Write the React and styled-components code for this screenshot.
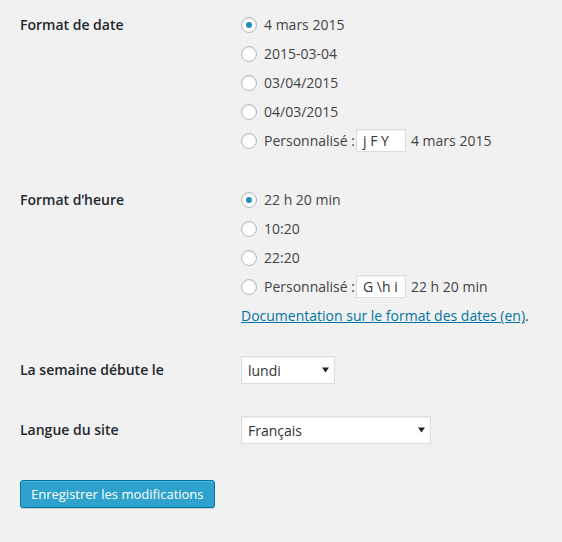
import React from "react";
import styled, { createGlobalStyle } from "styled-components";

const Global = createGlobalStyle`
  html, body { margin: 0; padding: 0; background: #f1f1f1; }
  body { font-family: "Open Sans", "Liberation Sans", sans-serif; font-size: 14px; color: #444; }
  * { box-sizing: border-box; }
`;

const Page = styled.div`
  padding: 10px 20px 20px 20px;
  min-height: 542px;
`;

const Row = styled.div`
  display: grid;
  grid-template-columns: 221px 1fr;
  padding-top: ${(p) => p.$top || 0}px;
`;

const Label = styled.div`
  font-weight: 600;
  color: #23282d;
  font-size: 14px;
  line-height: ${(p) => p.$lh || 29}px;
`;

const Field = styled.div`
  display: flex;
  flex-direction: column;
`;

const Line = styled.div`
  display: flex;
  align-items: center;
  height: 29px;
  white-space: nowrap;
`;

const Radio = styled.span`
  width: 16px;
  height: 16px;
  border-radius: 50%;
  border: 1px solid #b4b9be;
  background: #fff;
  box-shadow: inset 0 1px 2px rgba(0, 0, 0, 0.1);
  margin-right: 7px;
  display: inline-flex;
  align-items: center;
  justify-content: center;
  flex: none;
  &::after {
    content: "";
    width: 6px;
    height: 6px;
    border-radius: 50%;
    background: ${(p) => (p.$checked ? "#1e8cbe" : "transparent")};
  }
`;

const Custom = styled.span`
  display: inline-flex;
  align-items: center;
  width: 50px;
  height: 23px;
  margin: 0 5px 0 1px;
  padding: 0 6px;
  background: #fff;
  border: 1px solid #ddd;
  box-shadow: inset 0 1px 2px rgba(0, 0, 0, 0.07);
  color: #333;
`;

const DocLink = styled.a`
  color: #0074a2;
  text-decoration: underline;
`;

const Select = styled.div`
  display: flex;
  align-items: center;
  justify-content: space-between;
  width: ${(p) => p.$w}px;
  height: 28px;
  padding: 0 5px 0 6px;
  background: #fff;
  border: 1px solid #ddd;
  box-shadow: inset 0 1px 2px rgba(0, 0, 0, 0.07);
  color: #333;
`;

const Button = styled.button`
  margin-top: ${(p) => p.$top}px;
  height: 28px;
  padding: 0 10px 1px;
  font-family: "Open Sans", "Liberation Sans", sans-serif;
  font-size: 13px;
  color: #fff;
  background: #2ea2cc;
  border: 1px solid #0074a2;
  border-radius: 3px;
  box-shadow: inset 0 1px 0 rgba(120, 200, 230, 0.5), 0 1px 0 rgba(0, 0, 0, 0.15);
  cursor: pointer;
`;

const Arrow = () => (
  <svg width="7" height="6" viewBox="0 0 7 6">
    <path d="M0 0.5 L7 0.5 L3.5 5.5 Z" fill="#222" />
  </svg>
);

const Opt = ({ checked, children }) => (
  <Line>
    <Radio $checked={checked} />
    {children}
  </Line>
);

export default function App() {
  return (
    <>
      <Global />
      <Page>
        <Row>
          <Label>Format de date</Label>
          <Field>
            <Opt checked>4 mars 2015</Opt>
            <Opt>2015-03-04</Opt>
            <Opt>03/04/2015</Opt>
            <Opt>04/03/2015</Opt>
            <Opt>
              Personnalisé :<Custom>j F Y</Custom>4 mars 2015
            </Opt>
          </Field>
        </Row>
        <Row $top={30}>
          <Label>Format d’heure</Label>
          <Field>
            <Opt checked>22 h 20 min</Opt>
            <Opt>10:20</Opt>
            <Opt>22:20</Opt>
            <Opt>
              Personnalisé :<Custom>G \h i</Custom>22 h 20 min
            </Opt>
            <Line>
              <DocLink href="#">Documentation sur le format des dates (en)</DocLink>.
            </Line>
          </Field>
        </Row>
        <Row $top={26}>
          <Label $lh={28}>La semaine débute le</Label>
          <Field>
            <Select $w={94}>
              <span>lundi</span>
              <Arrow />
            </Select>
          </Field>
        </Row>
        <Row $top={32}>
          <Label $lh={28}>Langue du site</Label>
          <Field>
            <Select $w={190}>
              <span>Français</span>
              <Arrow />
            </Select>
          </Field>
        </Row>
        <Button $top={36}>Enregistrer les modifications</Button>
      </Page>
    </>
  );
}
